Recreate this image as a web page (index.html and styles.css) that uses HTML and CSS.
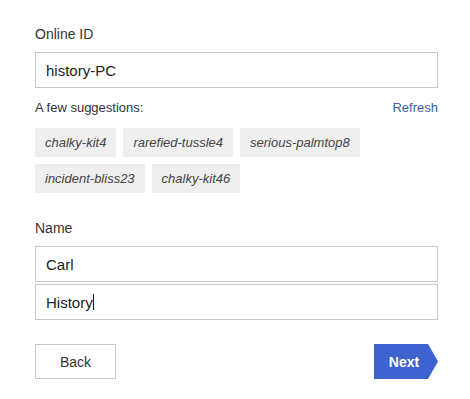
FILE: index.html
```html
<!DOCTYPE html>
<html lang="en">
<head>
  <meta charset="UTF-8" />
  <meta name="viewport" content="width=device-width, initial-scale=1.0"/>
  <title>Create Online ID</title>
  <link rel="stylesheet" href="styles.css">
</head>
<body>
  <main class="form">
    <label class="label">Online ID</label>
    <div class="field">history-PC</div>

    <div class="suggest-head">
      <span>A few suggestions:</span>
      <a class="refresh" href="#">Refresh</a>
    </div>
    <div class="chips">
      <span class="chip">chalky-kit4</span>
      <span class="chip">rarefied-tussle4</span>
      <span class="chip">serious-palmtop8</span>
      <span class="chip">incident-bliss23</span>
      <span class="chip">chalky-kit46</span>
    </div>

    <label class="label name-label">Name</label>
    <div class="field">Carl</div>
    <div class="field field-gap">History<span class="caret"></span></div>

    <div class="actions">
      <button class="btn back">Back</button>
      <button class="btn next">Next</button>
    </div>
  </main>
</body>
</html>
```

FILE: styles.css
```css
body {
  margin: 0;
  background: #fff;
  color: #333;
  font-family: "Liberation Sans", Arial, sans-serif;
}

.form {
  width: 403px;
  padding: 26px 0 0 35px;
}

.label {
  display: block;
  font-size: 14px;
  line-height: 16px;
  margin-bottom: 10px;
}

.name-label {
  margin-top: 27px;
}

.field {
  box-sizing: border-box;
  height: 36px;
  border: 1px solid #c9c9c9;
  padding: 0 10px;
  display: flex;
  align-items: center;
  font-size: 15px;
  color: #222;
}

.field-gap {
  margin-top: 2px;
}

.caret {
  display: inline-block;
  width: 1px;
  height: 16px;
  background: #111;
}

.suggest-head {
  display: flex;
  justify-content: space-between;
  font-size: 13px;
  line-height: 15px;
  margin-top: 12px;
}

.refresh {
  color: #3b5ca6;
  text-decoration: none;
}

.chips {
  display: flex;
  flex-wrap: wrap;
  gap: 7px;
  margin-top: 13px;
  width: 330px;
}

.chip {
  height: 29px;
  line-height: 29px;
  padding: 0 10px;
  background: #efefef;
  font-size: 13px;
  font-style: italic;
  color: #444;
}

.actions {
  display: flex;
  justify-content: space-between;
  margin-top: 24px;
}

.btn {
  height: 35px;
  border: none;
  font-family: inherit;
  font-size: 14px;
  cursor: pointer;
}

.back {
  width: 81px;
  background: #fff;
  border: 1px solid #c9c9c9;
  color: #333;
}

.next {
  width: 64px;
  padding: 0 4px 0 0;
  background: #3c63cf;
  color: #fff;
  font-weight: bold;
  clip-path: polygon(0 0, 54px 0, 100% 50%, 54px 100%, 0 100%);
}
```
